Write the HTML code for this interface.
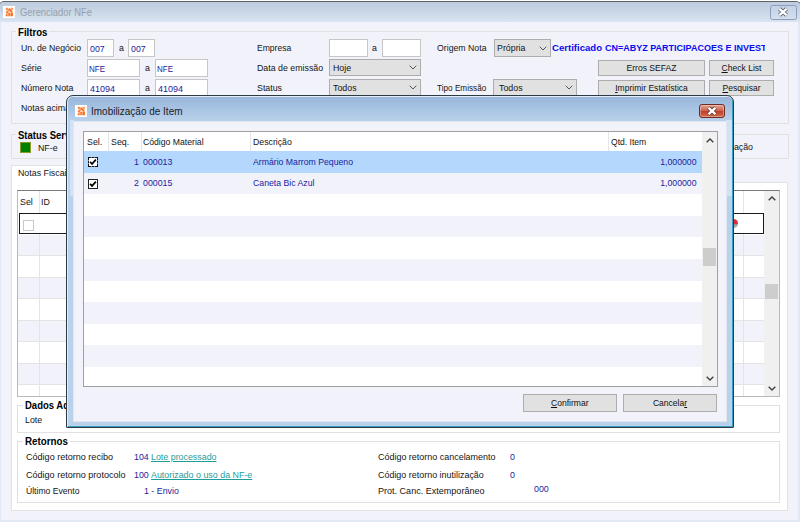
<!DOCTYPE html>
<html lang="pt-BR"><head>
<meta charset="utf-8">
<title>Gerenciador NFe</title>
<style>
html,body{margin:0;padding:0;}
body{width:800px;height:522px;overflow:hidden;background:#fff;position:relative;
 font-family:"Liberation Sans","DejaVu Sans",sans-serif;font-size:9px;color:#141414;line-height:12px;}
.a{position:absolute;box-sizing:border-box;}
.t{position:absolute;margin-top:-0.6px;white-space:nowrap;height:12px;line-height:12px;transform-origin:0 50%;transform:scaleX(.98);}
.r{transform-origin:100% 50%;}
.b{font-weight:bold;font-size:10px;margin-top:-0.95px;color:#000;transform:scaleX(.95);}
.v{color:#1c1c9c;}
#mw{left:-1px;top:1px;width:802px;height:530px;background:#dfe8f4;border:1px solid #5f6368;border-bottom:none;border-radius:5px 5px 0 0;}
#mtb{left:0;top:2px;width:800px;height:20px;border-radius:4px 4px 0 0;background:linear-gradient(#bdcbdd,#c7d5e5 45%,#d9e5f1);}
#mcl{left:1px;top:22px;width:797px;height:498px;background:#f2f3fa;}
.ico{width:12px;height:12px;background:#fff;}
.grp{border:1px solid #e1e1e1;}
.inp{background:#fff;border:1px solid #c6c6c6;}
.cmb{background:#e1e1e1;border:1px solid #adadad;}
.btn{background:#e1e1e1;border:1px solid #adadad;}
.bt{color:#111;transform-origin:50% 50%;transform:scaleX(.95);text-align:center;}
.m{background:#f2f3fa;height:12px;}
.mw{background:#fff;height:12px;}
u{text-decoration-thickness:1px;text-underline-offset:1px;}
.lnk{color:#1f9c9c;text-decoration:underline;text-underline-offset:1px;}
.alt{background:#f2f3fa;}
</style>
</head>
<body>
<!-- ================= MAIN WINDOW ================= -->
<div class="a" id="mw"></div>
<div class="a" id="mtb"></div>
<div class="a" id="mcl"></div>
<svg class="a ico" style="left:3px;top:6px" viewBox="0 0 12 12"><rect width="12" height="12" fill="#fff"></rect><g fill="#fb6a14"><rect x="2.7" y="1.8" width="7.4" height="8.5" opacity=".16"></rect><rect x="2.8" y="1.8" width="2.1" height="2.3" opacity=".7"></rect><rect x="7.7" y="1.8" width="2.3" height="1.9" opacity=".65"></rect><path d="M5 3.5 L6.3 2.3 L9.6 5.3 L8.3 6.5 Z"></path><path d="M2.7 6.4 L4.9 4.4 L5.9 5.5 L3.6 7.6 Z"></path><rect x="4.5" y="3.6" width="1.4" height="1.2" opacity=".5"></rect><rect x="5.3" y="6.8" width="1.8" height="3.4" opacity=".9"></rect><rect x="7.6" y="6.6" width="2.3" height="3.6"></rect><rect x="2.8" y="8.2" width="1.8" height="2" opacity=".9"></rect><rect x="3.8" y="6.8" width="1.6" height="1.6" opacity=".4"></rect></g></svg>
<div class="t" style="left: 20px; top: 8px; font-size: 10.4px; color: rgb(154, 160, 170); transform: scaleX(0.9034);">Gerenciador NFe</div>
<!-- main close button -->
<div class="a" style="left:770px;top:5px;width:27px;height:15px;border:1px solid #8f9bbb;border-radius:2.5px;background:linear-gradient(#c3d2e6,#d3dfee)"></div>
<svg class="a" style="left:777px;top:7px;width:12px;height:10px" viewBox="0 0 12 10"><path d="M2.4 1.8 L9.6 8.2 M9.6 1.8 L2.4 8.2" stroke="#5e6374" stroke-width="4" stroke-linecap="butt"></path><path d="M2.4 1.8 L9.6 8.2 M9.6 1.8 L2.4 8.2" stroke="#fff" stroke-width="2.3" stroke-linecap="butt"></path></svg>

<!-- Filtros group -->
<div class="a grp" style="left:11px;top:31px;width:778px;height:93px"></div>
<div class="a m" style="left:16px;top:26px;width:33px"></div>
<div class="t b" style="left: 18px; top: 27.9px; transform: scaleX(0.962);">Filtros</div>
<div class="t" style="left: 21px; top: 42.8px; transform: scaleX(0.967);">Un. de Negócio</div>
<div class="t" style="left:21px;top:62.8px">Série</div>
<div class="t" style="left:21px;top:82.6px">Número Nota</div>
<div class="t" style="left:21px;top:102.1px">Notas acima</div>

<div class="a inp" style="left:87px;top:39px;width:27px;height:18px"></div>
<div class="t v" style="left:89.5px;top:43.75px">007</div>
<div class="t" style="left:118.5px;top:42.75px">a</div>
<div class="a inp" style="left:128px;top:39px;width:27px;height:18px"></div>
<div class="t v" style="left:130.5px;top:43.75px">007</div>

<div class="a inp" style="left:87px;top:59px;width:53px;height:18px"></div>
<div class="t v" style="left: 89.3px; top: 63.75px; transform: scaleX(0.8889);">NFE</div>
<div class="t" style="left:145px;top:62.75px">a</div>
<div class="a inp" style="left:155px;top:59px;width:53px;height:18px"></div>
<div class="t v" style="left: 157.3px; top: 63.75px; transform: scaleX(0.8889);">NFE</div>

<div class="a inp" style="left:87px;top:79px;width:53px;height:18px"></div>
<div class="t v" style="left: 89.6px; top: 83.75px; transform: scaleX(0.9988);">41094</div>
<div class="t" style="left:145px;top:82.75px">a</div>
<div class="a inp" style="left:155px;top:79px;width:53px;height:18px"></div>
<div class="t v" style="left: 157.6px; top: 83.75px; transform: scaleX(0.9988);">41094</div>

<div class="t" style="left: 256.7px; top: 42.75px; transform: scaleX(0.9524);">Empresa</div>
<div class="t" style="left:256.7px;top:62.75px">Data de emissão</div>
<div class="t" style="left:256.7px;top:82.75px">Status</div>
<div class="a inp" style="left:329px;top:39px;width:39px;height:18px"></div>
<div class="t" style="left:372px;top:42.75px">a</div>
<div class="a inp" style="left:382px;top:39px;width:39px;height:18px"></div>
<div class="a cmb" style="left:329px;top:59px;width:92px;height:17px"></div>
<div class="t" style="left:332.5px;top:62.75px">Hoje</div>
<svg class="a" style="left:409px;top:65px;width:8px;height:5px" viewBox="0 0 8 5"><path d="M0.7 0.7 L4 4 L7.3 0.7" fill="none" stroke="#555" stroke-width="1"></path></svg>
<div class="a cmb" style="left:329px;top:79px;width:92px;height:17px"></div>
<div class="t" style="left:332.5px;top:82.75px">Todos</div>
<svg class="a" style="left:409px;top:85px;width:8px;height:5px" viewBox="0 0 8 5"><path d="M0.7 0.7 L4 4 L7.3 0.7" fill="none" stroke="#555" stroke-width="1"></path></svg>

<div class="t" style="left: 436.7px; top: 42.75px; transform: scaleX(0.97);">Origem Nota</div>
<div class="a cmb" style="left:494px;top:39px;width:57px;height:18px"></div>
<div class="t" style="left:496.5px;top:42.75px">Própria</div>
<svg class="a" style="left:539px;top:45.5px;width:8px;height:5px" viewBox="0 0 8 5"><path d="M0.7 0.7 L4 4 L7.3 0.7" fill="none" stroke="#555" stroke-width="1"></path></svg>
<div class="a" style="left:552px;top:40px;width:212.5px;height:16px;overflow:hidden"><div class="t" style="left: 0px; top: 2.75px; font-weight: bold; color: rgb(10, 10, 240); transform: scaleX(1.0635);">Certificado</div><div class="t" style="left: 53px; top: 2.75px; font-weight: bold; color: rgb(10, 10, 240); transform: scaleX(1.0004);">CN=ABYZ PARTICIPACOES E INVEST</div></div>
<div class="t" style="left: 436.7px; top: 82.75px; transform: scaleX(0.9098);">Tipo Emissão</div>
<div class="a cmb" style="left:493px;top:79px;width:84px;height:17px"></div>
<div class="t" style="left:499px;top:82.75px">Todos</div>
<svg class="a" style="left:565px;top:85px;width:8px;height:5px" viewBox="0 0 8 5"><path d="M0.7 0.7 L4 4 L7.3 0.7" fill="none" stroke="#555" stroke-width="1"></path></svg>

<div class="a btn" style="left:598px;top:60px;width:107px;height:16px"></div>
<div class="t bt" style="left:598px;width:107px;top:62.9px">Erros SEFAZ</div>
<div class="a btn" style="left:709px;top:60px;width:65px;height:16px"></div>
<div class="t bt" style="left:709px;width:65px;top:62.9px"><u>C</u>heck List</div>
<div class="a btn" style="left:598px;top:80px;width:107px;height:16px"></div>
<div class="t bt" style="left:598px;width:107px;top:82.9px"><u>I</u>mprimir Estatística</div>
<div class="a btn" style="left:709px;top:80px;width:65px;height:16px"></div>
<div class="t bt" style="left:709px;width:65px;top:82.9px"><u>P</u>esquisar</div>

<!-- Status group -->
<div class="a grp" style="left:11px;top:134px;width:778px;height:25px"></div>
<div class="a m" style="left:16px;top:130px;width:70px"></div>
<div class="t b" style="left:18px;top:130.5px">Status Serviço</div>
<div class="a" style="left:20px;top:142px;width:11px;height:11px;background:#008000;border:1px solid #8a9a2a"></div>
<div class="t" style="left:37.5px;top:142.5px">NF-e</div>
<div class="t r" style="right:47px;top:141.9px">Inutilização</div>

<!-- Tab + page -->
<div class="a" style="left:11px;top:165px;width:64px;height:19px;background:#fff;border:1px solid #e2e2e2;border-bottom:none"></div>
<div class="a" style="left:11px;top:182px;width:777px;height:329px;background:#fff;border:1px solid #e2e2e2"></div>
<div class="a" style="left:12px;top:180px;width:62px;height:4px;background:#fff"></div>
<div class="t" style="left:17.5px;top:168px">Notas Fiscais</div>

<!-- main grid -->
<div class="a" id="mg" style="left:17px;top:190px;width:763px;height:207px;background:#fff;border:1px solid #b9b9b9;border-top-color:#7a7a7a;overflow:hidden">
  <div class="a alt" style="left:0;top:43.5px;width:746px;height:21.5px"></div>
  <div class="a alt" style="left:0;top:86.5px;width:746px;height:21.5px"></div>
  <div class="a alt" style="left:0;top:129.5px;width:746px;height:21.5px"></div>
  <div class="a alt" style="left:0;top:172.5px;width:746px;height:21.5px"></div>
  <div class="a" style="left:0;top:64px;width:746px;height:1px;background:#e4e4e4"></div>
  <div class="a" style="left:0;top:86px;width:746px;height:1px;background:#e4e4e4"></div>
  <div class="a" style="left:0;top:107px;width:746px;height:1px;background:#e4e4e4"></div>
  <div class="a" style="left:0;top:129px;width:746px;height:1px;background:#e4e4e4"></div>
  <div class="a" style="left:0;top:150px;width:746px;height:1px;background:#e4e4e4"></div>
  <div class="a" style="left:0;top:172px;width:746px;height:1px;background:#e4e4e4"></div>
  <div class="a" style="left:0;top:193px;width:746px;height:1px;background:#e4e4e4"></div>
  <div class="a" style="left:21px;top:0;width:1px;height:206px;background:#e4e4e4"></div>
  <div class="a" style="left:725px;top:0;width:1px;height:206px;background:#e4e4e4"></div>
  <div class="a" style="left:1px;top:22px;width:745px;height:21px;border:1px solid #1a1a1a;background:#fff"></div>
  <div class="a" style="left:5px;top:29px;width:11px;height:11px;border:1px solid #c9c9c9;background:#fff"></div>
  <div class="a" style="left:711px;top:27.5px;width:9px;height:9px;border-radius:5px;background:linear-gradient(#e8222a 0,#d83038 55%,#9a9a9a 62%,#b0b0b0)"></div>
  <div class="t" style="left:2.4px;top:5.5px">Sel</div>
  <div class="t" style="left:23.3px;top:5.5px">ID</div>
  <div class="a" style="left:746px;top:0;width:16px;height:206px;background:#f0f0f0"></div>
  <div class="a" style="left:747px;top:93px;width:13px;height:15px;background:#cdcdcd"></div>
  <svg class="a" style="left:750px;top:5px;width:8px;height:5px" viewBox="0 0 8 5"><path d="M0.7 4.3 L4 1 L7.3 4.3" fill="none" stroke="#404040" stroke-width="1.4"></path></svg>
  <svg class="a" style="left:750px;top:195px;width:8px;height:5px" viewBox="0 0 8 5"><path d="M0.7 0.7 L4 4 L7.3 0.7" fill="none" stroke="#404040" stroke-width="1.4"></path></svg>
</div>

<!-- Dados Adicionais group -->
<div class="a grp" style="left:17px;top:404.5px;width:763px;height:28px"></div>
<div class="a mw" style="left:23px;top:399.5px;width:84px"></div>
<div class="t b" style="left:25px;top:401px">Dados Adicionais</div>
<div class="t" style="left:25px;top:414.7px">Lote</div>

<!-- Retornos group -->
<div class="a grp" style="left:17px;top:441px;width:763px;height:61.5px"></div>
<div class="a mw" style="left:23px;top:436px;width:47px"></div>
<div class="t b" style="left: 25px; top: 437.4px; transform: scaleX(0.9794);">Retornos</div>
<div class="t" style="left: 25.5px; top: 451.1px; transform: scaleX(1.0051);">Código retorno recibo</div>
<div class="t" style="left: 25.5px; top: 469.1px; transform: scaleX(1.0044);">Código retorno protocolo</div>
<div class="t" style="left: 25.5px; top: 486px; transform: scaleX(0.9548);">Último Evento</div>
<div class="t v" style="left:134px;top:451.1px">104</div>
<div class="t lnk" style="left: 150.7px; top: 451.1px; transform: scaleX(0.9843);">Lote processado</div>
<div class="t v" style="left:134px;top:469.1px">100</div>
<div class="t lnk" style="left: 150.7px; top: 469.1px; transform: scaleX(0.9877);">Autorizado o uso da NF-e</div>
<div class="t v" style="left:144.2px;top:486px">1 - Envio</div>
<div class="t" style="left: 377.5px; top: 451.1px; transform: scaleX(0.9951);">Código retorno cancelamento</div>
<div class="t" style="left: 377.5px; top: 469.1px; transform: scaleX(0.9927);">Código retorno inutilização</div>
<div class="t" style="left: 377.5px; top: 486px; transform: scaleX(1.0041);">Prot. Canc. Extemporâneo</div>
<div class="t v" style="left:510px;top:451.1px">0</div>
<div class="t v" style="left:510px;top:469.1px">0</div>
<div class="t v" style="left:534px;top:484px">000</div>

<!-- ================= DIALOG ================= -->
<div class="a" id="dw" style="left:66px;top:95px;width:668px;height:333px;border:1px solid #2c3a44;border-radius:7px 7px 1px 1px;background:#b9d1ea;box-shadow:inset 1px 1px 0 rgba(255,255,255,.6),inset -1px -1px 0 #35a0c2"></div>
<div class="a" style="left:68px;top:97px;width:664px;height:25px;border-radius:5px 5px 0 0;background:linear-gradient(#98b6da,#a9c4e3 50%,#bbd2eb)"></div>
<div class="a" style="left:70px;top:120px;width:4px;height:76px;background:#d2e1f3"></div>
<div class="a" style="left:726px;top:120px;width:6px;height:76px;background:#d2e1f3"></div>
<div class="a" style="left:73px;top:121px;width:654px;height:301px;background:#f2f3fa;border:1px solid #dfe6f0"></div>
<svg class="a ico" style="left:75px;top:105px" viewBox="0 0 12 12"><rect width="12" height="12" fill="#fff"></rect><g fill="#fb6a14"><rect x="2.7" y="1.8" width="7.4" height="8.5" opacity=".16"></rect><rect x="2.8" y="1.8" width="2.1" height="2.3" opacity=".7"></rect><rect x="7.7" y="1.8" width="2.3" height="1.9" opacity=".65"></rect><path d="M5 3.5 L6.3 2.3 L9.6 5.3 L8.3 6.5 Z"></path><path d="M2.7 6.4 L4.9 4.4 L5.9 5.5 L3.6 7.6 Z"></path><rect x="4.5" y="3.6" width="1.4" height="1.2" opacity=".5"></rect><rect x="5.3" y="6.8" width="1.8" height="3.4" opacity=".9"></rect><rect x="7.6" y="6.6" width="2.3" height="3.6"></rect><rect x="2.8" y="8.2" width="1.8" height="2" opacity=".9"></rect><rect x="3.8" y="6.8" width="1.6" height="1.6" opacity=".4"></rect></g></svg>
<div class="t" style="left: 91px; top: 106.8px; font-size: 10.4px; color: rgb(26, 26, 42); transform: scaleX(0.9602);">Imobilização de Item</div>
<!-- dialog close -->
<div class="a" style="left:699px;top:104px;width:26px;height:14px;border:1px solid #6f2a22;border-radius:3px;background:linear-gradient(#e0a090,#cf6a56 45%,#c03c28 50%,#cf6a4a);box-shadow:inset 0 0 0 1px rgba(255,255,255,.35)"></div>
<svg class="a" style="left:706px;top:106px;width:12px;height:10px" viewBox="0 0 12 10"><path d="M2.6 1.8 L9.4 8.2 M9.4 1.8 L2.6 8.2" stroke="#6e3a34" stroke-width="4" stroke-linecap="butt"></path><path d="M2.6 1.8 L9.4 8.2 M9.4 1.8 L2.6 8.2" stroke="#fff" stroke-width="2.3" stroke-linecap="butt"></path></svg>

<!-- dialog grid -->
<div class="a" id="dg" style="left:83px;top:131px;width:635px;height:255.5px;background:#fff;border:1px solid #a0a0a0;overflow:hidden">
  <div class="a" style="left:0;top:19px;width:618px;height:21.6px;background:#b4d8fd"></div>
  <div class="a alt" style="left:0;top:40.6px;width:618px;height:21.6px"></div>
  <div class="a alt" style="left:0;top:83.8px;width:618px;height:21.6px"></div>
  <div class="a alt" style="left:0;top:127px;width:618px;height:21.6px"></div>
  <div class="a alt" style="left:0;top:170.2px;width:618px;height:21.6px"></div>
  <div class="a alt" style="left:0;top:213.4px;width:618px;height:21.6px"></div>
  <div class="a" style="left:24px;top:0;width:1px;height:19px;background:#e5e5e5"></div>
  <div class="a" style="left:56.5px;top:0;width:1px;height:19px;background:#e5e5e5"></div>
  <div class="a" style="left:166px;top:0;width:1px;height:19px;background:#e5e5e5"></div>
  <div class="a" style="left:524px;top:0;width:1px;height:19px;background:#e5e5e5"></div>
  <div class="t" style="left:2.5px;top:5px">Sel.</div>
  <div class="t" style="left:26.5px;top:5px">Seq.</div>
  <div class="t" style="left: 58.5px; top: 5px; transform: scaleX(0.9614);">Código Material</div>
  <div class="t" style="left: 168.5px; top: 5px; transform: scaleX(0.9696);">Descrição</div>
  <div class="t" style="left: 526.5px; top: 5px; transform: scaleX(0.9509);">Qtd. Item</div>
  <!-- row 1 -->
  <div class="a" style="left:4px;top:25px;width:10px;height:10px;background:#fff;border:1px dashed #111"></div>
  <svg class="a" style="left:5px;top:26px;width:8px;height:8px" viewBox="0 0 8 8"><path d="M1.1 3.8 L3.1 5.9 L6.9 1.6" fill="none" stroke="#000" stroke-width="1.7"></path></svg>
  <div class="t v r" style="right:578.2px;top:24.5px">1</div>
  <div class="t v" style="left:58.5px;top:24.5px">000013</div>
  <div class="t v" style="left: 168.5px; top: 24.5px; transform: scaleX(0.9657);">Armário Marrom Pequeno</div>
  <div class="t v r" style="right: 20.5px; top: 24.5px; transform: scaleX(0.9695);">1,000000</div>
  <!-- row 2 -->
  <div class="a" style="left:4px;top:46.5px;width:10px;height:10px;background:#fff;border:1px solid #222"></div>
  <svg class="a" style="left:5px;top:47.5px;width:8px;height:8px" viewBox="0 0 8 8"><path d="M1.1 3.8 L3.1 5.9 L6.9 1.6" fill="none" stroke="#000" stroke-width="1.7"></path></svg>
  <div class="t v r" style="right:578.2px;top:46px">2</div>
  <div class="t v" style="left:58.5px;top:46px">000015</div>
  <div class="t v" style="left: 168.5px; top: 46px; transform: scaleX(0.9678);">Caneta Bic Azul</div>
  <div class="t v r" style="right: 20.5px; top: 46px; transform: scaleX(0.9695);">1,000000</div>
  <!-- scrollbar -->
  <div class="a" style="left:618px;top:0;width:16px;height:255px;background:#f0f0f0"></div>
  <div class="a" style="left:619px;top:116px;width:13px;height:18px;background:#cdcdcd"></div>
  <svg class="a" style="left:622px;top:6px;width:8px;height:5px" viewBox="0 0 8 5"><path d="M0.7 4.3 L4 1 L7.3 4.3" fill="none" stroke="#404040" stroke-width="1.4"></path></svg>
  <svg class="a" style="left:622px;top:244px;width:8px;height:5px" viewBox="0 0 8 5"><path d="M0.7 0.7 L4 4 L7.3 0.7" fill="none" stroke="#404040" stroke-width="1.4"></path></svg>
</div>
<div class="a btn" style="left:523px;top:394px;width:93.5px;height:18px"></div>
<div class="t bt" style="left:523px;width:93.5px;top:397.1px"><u>C</u>onfirmar</div>
<div class="a btn" style="left:623px;top:394px;width:94px;height:18px"></div>
<div class="t bt" style="left:623px;width:94px;top:397.1px">Cancela<u>r</u></div>


</body></html>
